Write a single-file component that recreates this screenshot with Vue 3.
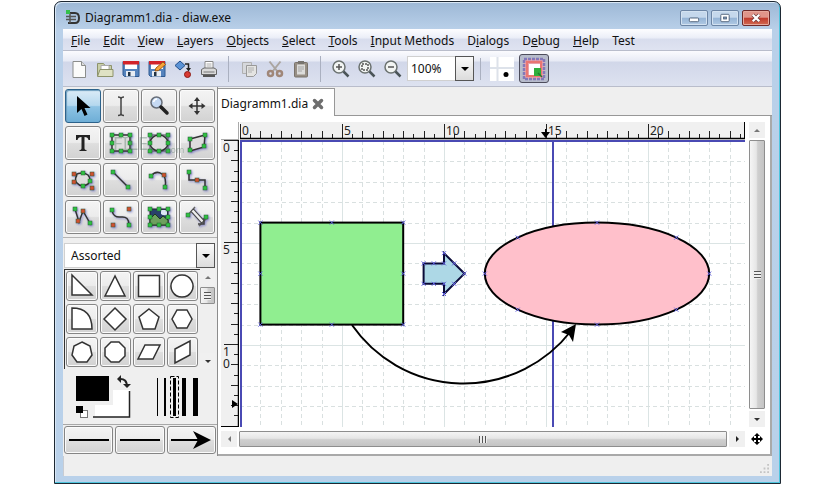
<script setup>
import { ref, computed, onMounted, onBeforeUnmount } from 'vue'

const menus = [
  ['', 'F', 'ile'], ['', 'E', 'dit'], ['', 'V', 'iew'], ['', 'L', 'ayers'],
  ['', 'O', 'bjects'], ['', 'S', 'elect'], ['', 'T', 'ools'], ['', 'I', 'nput Methods'],
  ['D', 'i', 'alogs'], ['D', 'e', 'bug'], ['', 'H', 'elp'], ['Test', '', '']
]

const floppy = '<path d="M2 2.500h16v15H3.500L2 16z" fill="#5583bd" stroke="#2f5a92"/><rect x="4" y="3" width="12" height="7" fill="#fff"/><rect x="2" y="2" width="16" height="3.500" fill="#d2232a"/><rect x="5" y="12" width="9" height="5.500" fill="#e8edf4"/><rect x="7" y="13" width="2.500" height="4" fill="#234"/>'
const lens = '<circle cx="8" cy="8" r="6" fill="#f2f5f3" stroke="#6b7270" stroke-width="1.500"/><path d="M12.500 12.500l5 5" stroke="#4b5558" stroke-width="2.500"/>'

const bar = [
  [
    ['New', '<path d="M4 2.500h8.500l4 4v12H4z" fill="#fbfbfa" stroke="#8b8d8b"/><path d="M12.500 2.500v4h4" fill="#ddd" stroke="#8b8d8b"/>'],
    ['Open', '<path d="M2.500 17V4.500h6l1.500 2h6.500v4" fill="#c9cfa9" stroke="#8d936b"/><path d="M6 6.500h8v5H6z" fill="#fff" stroke="#aaa"/><path d="M2.500 17.500l2.500-7h13v7z" fill="#dfe2c4" stroke="#8d936b"/>'],
    ['Save', floppy],
    ['Save As', floppy + '<path d="M8 12l1-3 7-6 2.500 2.500-7 6z" fill="#f6a43a" stroke="#a35b12"/>'],
    ['Export', '<path d="M2 6.500L7 2l5 4.500L7 11z" fill="#5b93d6" stroke="#234f8a"/><path d="M12 5h3.500v5" fill="none" stroke="#222" stroke-width="1.500"/><path d="M13 9h5l-2.500 3.500z" fill="#222"/><circle cx="14.500" cy="15.500" r="3" fill="#d93a32" stroke="#8d1a14"/>'],
    ['Print', '<path d="M6 10V2.500h8V10" fill="#fff" stroke="#888"/><path d="M7.500 5h5M7.500 7h5" stroke="#aaa"/><path d="M2.500 10.500L5 9h10l2.500 1.500v5h-15z" fill="#dadada" stroke="#666"/><path d="M4 17h12" stroke="#555" stroke-width="2"/><path d="M4.500 13h11" stroke="#777"/>']
  ],
  [
    ['Copy', '<path d="M3.500 3.500h9v11h-9z" fill="#d6d8dc" stroke="#b0b0b0"/><path d="M7.500 6.500h10v8l-3 3h-7z" fill="#e4e4e2" stroke="#999"/><path d="M9 9h6M9 11h6M9 13h4" stroke="#b0b0b0"/>'],
    ['Cut', '<path d="M4.500 2.500l8 10M15.500 2.500l-8 10" stroke="#aaa5a0" stroke-width="2"/><circle cx="5.500" cy="14.500" r="2.500" fill="none" stroke="#a08778" stroke-width="2.500"/><circle cx="14.500" cy="14.500" r="2.500" fill="none" stroke="#a08778" stroke-width="2.500"/>'],
    ['Paste', '<rect x="3.500" y="3.500" width="13" height="14.500" rx="1" fill="#978f85" stroke="#79736b"/><path d="M6 5.500h8v10H6z" fill="#dcdcda"/><rect x="7" y="2" width="6" height="3" fill="#77746f"/><path d="M7 8h6M7 10h6M7 12h4" stroke="#a5a5a5"/>']
  ],
  [
    ['Zoom In', lens + '<path d="M5 8h6M8 5v6" stroke="#555" stroke-width="1.500"/>'],
    ['Zoom Fit', lens + '<rect x="5" y="5" width="6" height="6" fill="none" stroke="#555" stroke-width="1.500" stroke-dasharray="2 1"/>'],
    ['Zoom Out', lens + '<path d="M5 8h6" stroke="#555" stroke-width="1.500"/>']
  ]
]

const dots = (pts, c = '#2fc043') =>
  pts.map(([x, y]) => `<rect x="${x - 2}" y="${y - 2}" width="4" height="4" fill="${c}" stroke="#2a5a30" stroke-width=".5"/>`).join('')
const frame = [[3, 4], [12, 4], [21, 4], [3, 12], [21, 12], [3, 20], [12, 20], [21, 20]]
const red = '#d05030'

const tools = [
  ['Modify', '<path d="M6 2v17l4.500-4 3 7 3-1.500-3-6.500h6z" fill="#000"/>'],
  ['Text edit', '<path d="M9 3q3 0 3 2q0-2 3-2M12 5v15M9 21.500q3 0 3-2q0 2 3 2" fill="none" stroke="#444" stroke-width="1.500"/>'],
  ['Magnify', '<circle cx="9.500" cy="8.500" r="5.500" fill="#c5d9f3" stroke="#666d78" stroke-width="1.500"/><path d="M6.500 8q1-3 3.500-3" stroke="#fff" stroke-width="1.500" fill="none"/><path d="M14 13l6 6" stroke="#222" stroke-width="3.500" stroke-linecap="round"/>'],
  ['Scroll', '<path d="M12 5v14M5 12h14" stroke="#333" stroke-width="1.500"/><path d="M12 3l3 4H9zM12 21l3-4H9zM3.500 12l4-3v6zM20.500 12l-4-3v6z" fill="#333"/>'],
  ['Text', '<path d="M5 4h14v5h-1.500q-.5-3-4-3v11.500q0 1.500 2 1.500v1h-7v-1q2 0 2-1.500V6q-3.500 0-4 3H5z" fill="#222"/>'],
  ['Box', '<rect x="3" y="4" width="18" height="16" fill="#ddd" stroke="#333" stroke-width="1.500"/>' + dots(frame)],
  ['Ellipse', '<rect x="3" y="4" width="18" height="16" fill="none" stroke="#555"/><ellipse cx="12" cy="12" rx="9" ry="8" fill="#ddd" stroke="#333" stroke-width="1.500"/>' + dots(frame)],
  ['Polygon', '<path d="M5 8l15-4-1 12-14 4z" fill="#ddd" stroke="#333" stroke-width="1.500"/>' + dots([[5, 8], [20, 4], [19, 15], [5, 19]])],
  ['Beziergon', '<path d="M4 7q7-4 13 0q4 5 0 9q-7 4-11-1q-3-3 0-8" fill="#ddd" stroke="#333" stroke-width="1.500"/>' + dots([[12, 5], [19, 13], [12, 18]]) + dots([[3, 6], [21, 6], [3, 14], [21, 20]], red)],
  ['Line', '<path d="M4 4l16 16" stroke="#333" stroke-width="1.500"/>' + dots([[4, 4], [19, 19]])],
  ['Arc', '<path d="M4 8q5-6 11-2q5 4 3 13" fill="none" stroke="#333" stroke-width="1.500"/>' + dots([[4, 8], [18, 19]]) + dots([[17, 7]], red)],
  ['Zigzagline', '<path d="M4 4v8h16v9" fill="none" stroke="#333" stroke-width="1.500"/>' + dots([[4, 4], [20, 20]]) + dots([[12, 12]], red)],
  ['Polyline', '<path d="M4 4l4 13 4-11 8 14" fill="none" stroke="#333" stroke-width="1.500"/>' + dots([[4, 4], [19, 18]]) + dots([[7, 16], [12, 6]], red)],
  ['Bezierline', '<path d="M3 5q1 8 9 7q8-1 8 8" fill="none" stroke="#333" stroke-width="1.500"/>' + dots([[3, 5], [20, 20]]) + dots([[20, 4], [4, 20]], red)],
  ['Image', '<rect x="3" y="4" width="18" height="16" fill="#29406b" stroke="#222"/><path d="M14 5h6v5q-4 1-6-1z" fill="#dce7f4"/><path d="M3 14l5-5 5 5 3-3 5 4v5H3z" fill="#6da05e" stroke="#1d3a1d"/>' + dots(frame)],
  ['Outline', '<path d="M3 10l7-8M14 21l8-8" stroke="#666" stroke-width="1.500"/><path d="M7 5l11 12" stroke="#444" stroke-width="4.500"/><path d="M7.500 5.500l10 11" stroke="#eee" stroke-width="2.500"/><path d="M19 13v6h-6" fill="none" stroke="#444" stroke-width="1.500"/>' + dots([[3, 10], [21, 12]])]
]

const shapes = [
  ['Right triangle', 'M4 3v20h20z'],
  ['Triangle', 'M14 4L4 24h20z'],
  ['Square', 'M3.500 3.500h21v21h-21z'],
  ['Circle', 'M14 3a11 11 0 1 0 .01 0z'],
  ['Quarter circle', 'M4 3q20 0 20 21H4z'],
  ['Diamond', 'M14 3l11 11-11 11L3 14z'],
  ['Pentagon', 'M14 4l10 8-4 12H8L4 12z'],
  ['Hexagon', 'M9 5h10l5 9-5 9H9l-5-9z'],
  ['Heptagon', 'M14 4l8 4 2 9-5 7H9l-5-7 2-9z'],
  ['Octagon', 'M10 4h8l6 6v8l-6 6h-8l-6-6v-8z'],
  ['Parallelogram', 'M10 7h15l-7 14H3z'],
  ['Slanted parallelogram', 'M7 11l15-8v14L7 25z']
]

/* canvas geometry, in pixels per diagram unit */
const UNIT = 20.4
const u = n => n * UNIT
const tick = n => (n % 5 === 0 ? 14 : Number.isInteger(n) ? 7 : 4)

const canvas = ref(null)
const size = ref({ w: 0, h: 0 })
const steps = px => Array.from({ length: Math.floor((px / UNIT) * 2) + 1 }, (_, i) => i / 2)
const isWhole = n => Number.isInteger(n)
const xs = computed(() => steps(size.value.w))
const ys = computed(() => steps(size.value.h))
const labels = (list, px) => list.filter(n => n % 5 === 0 && u(n) + 24 < px)
const xLabels = computed(() => labels(xs.value, size.value.w))
const yLabels = computed(() => labels(ys.value, size.value.h))

let watcher
const measure = () => {
  const r = canvas.value.getBoundingClientRect()
  size.value = { w: r.width, h: r.height }
}
onMounted(() => {
  measure()
  watcher = new ResizeObserver(measure)
  watcher.observe(canvas.value)
})
onBeforeUnmount(() => watcher && watcher.disconnect())

const k = Math.SQRT1_2
const handles = [
  [1, 4], [4.5, 4], [8, 4], [1, 6.5], [8, 6.5], [1, 9], [4.5, 9], [8, 9],
  [9, 6], [9.5, 6], [10, 6], [10, 5.5], [10.5, 6], [11, 6.5], [10.5, 7], [10, 7.5], [10, 7], [9.5, 7], [9, 7],
  [12, 6.5], [23, 6.5], [17.5, 4], [17.5, 9],
  [17.5 - 5.5 * k, 6.5 - 2.5 * k], [17.5 + 5.5 * k, 6.5 - 2.5 * k],
  [17.5 - 5.5 * k, 6.5 + 2.5 * k], [17.5 + 5.5 * k, 6.5 + 2.5 * k]
]
const arrowShape = [[9, 6], [10, 6], [10, 5.5], [11, 6.5], [10, 7.5], [10, 7], [9, 7]]
  .map(p => p.map(u).join(',')).join(' ')

const active = ref('Modify')
const snap = ref(true)
const zoom = ref('100%')
const sheet = ref('Assorted')
</script>

<template>
  <div class="desktop">
    <div class="window">
      <header class="title">
        <svg class="logo" viewBox="0 0 16 16" aria-hidden="true">
          <path d="M3 3h7q4 0 4 5t-4 5H3" fill="none" stroke="#333" stroke-width="2" />
          <path d="M1 6.500h10M1 9.500h10M5 3v10" stroke="#555" stroke-width="1.500" />
          <rect x="1" y="0" width="4" height="4" fill="#35c04a" />
        </svg>
        <h1>Diagramm1.dia - diaw.exe</h1>
        <div class="controls">
          <button aria-label="Minimize"><svg viewBox="0 0 28 15"><rect x="9" y="7.500" width="10" height="4" rx="1" fill="#fff" stroke="#4d5f78" /></svg></button>
          <button aria-label="Maximize"><svg viewBox="0 0 28 15"><rect x="9.500" y="3.500" width="9" height="8" rx="1" fill="#fff" stroke="#4d5f78" /><rect x="12.500" y="6.500" width="3" height="2" fill="#8ba9cb" stroke="#4d5f78" /></svg></button>
          <button class="close" aria-label="Close"><svg viewBox="0 0 28 15"><path d="M10.500 4l7 7M17.500 4l-7 7" stroke="#6e3a3a" stroke-width="4" /><path d="M10.500 4l7 7M17.500 4l-7 7" stroke="#fff" stroke-width="2.500" /></svg></button>
        </div>
      </header>

      <nav class="menu">
        <button v-for="m in menus" :key="m.join('')">{{ m[0] }}<u>{{ m[1] }}</u>{{ m[2] }}</button>
      </nav>

      <div class="toolbar">
        <div v-for="(group, g) in bar" :key="g" class="group">
          <button v-for="b in group" :key="b[0]" class="flat" :aria-label="b[0]">
            <svg viewBox="0 0 20 20" v-html="b[1]" />
          </button>
        </div>
        <div class="combo zoom">
          <select v-model="zoom" aria-label="Zoom"><option>50%</option><option>100%</option><option>200%</option></select>
          <span class="drop"></span>
        </div>
        <i class="rule"></i>
        <button class="grid-toggle" aria-label="Snap to grid">
          <svg viewBox="0 0 24 24"><path d="M0 0h24v24H0z" fill="#fff" /><path d="M7.500 0v24M0 11h24" stroke="#dde2ea" stroke-width="2" /><circle cx="16" cy="17.500" r="2.500" /></svg>
        </button>
        <button class="snap" :aria-pressed="snap" aria-label="Snap to objects" @click="snap = !snap">
          <svg viewBox="0 0 24 24">
            <rect x="2" y="2" width="20" height="20" fill="#e9a0aa" stroke="#8478b8" stroke-width="2.500" stroke-dasharray="3 1" />
            <rect x="5" y="5" width="14" height="14" fill="none" stroke="#ea7672" stroke-width="2" />
            <rect x="7" y="7" width="11" height="11" fill="#fff" />
            <path d="M12 11h7v8h-7z" fill="#2fae3c" />
            <path d="M16 16l4 4" stroke="#217a30" stroke-width="1.500" />
          </svg>
        </button>
      </div>

      <main class="work">
        <aside class="side">
          <div class="tools">
            <button v-for="(t, i) in tools" :key="t[0]" :class="['tool', { on: active === t[0], glow: i > 4 }]" :aria-label="t[0]" @click="active = t[0]">
              <svg viewBox="0 0 24 24" v-html="t[1]" />
            </button>
            <div class="mark" aria-hidden="true"><b>FILE</b><small>.com</small></div>
          </div>
          <div class="sheet">
            <div class="combo">
              <select v-model="sheet" aria-label="Sheet"><option>Assorted</option><option>Flowchart</option><option>UML</option></select>
              <span class="drop"></span>
            </div>
            <div class="palette">
              <div class="shapes">
                <button v-for="s in shapes" :key="s[0]" class="shape" :aria-label="s[0]">
                  <svg viewBox="0 0 28 28"><path :d="s[1]" fill="#fff" stroke="#333" stroke-width="1.500" /></svg>
                </button>
              </div>
              <div class="vbar slim">
                <button class="arrow up" aria-label="Scroll up"></button>
                <span class="thumb"><i class="grip"></i></span>
                <button class="arrow down" aria-label="Scroll down"></button>
              </div>
            </div>
          </div>
          <div class="style">
            <svg class="colors" viewBox="0 0 56 44" role="img" aria-label="Foreground and background colours">
              <rect x="20" y="15" width="35" height="27" fill="#fff" />
              <path d="M54.500 16v26H18" fill="none" stroke="#222" stroke-width="1.500" />
              <rect x="0" y="0" width="38" height="30" fill="#efefef" />
              <rect x="1" y="1" width="33" height="25" />
              <path d="M44 4q8-1 8 8" fill="none" stroke="#222" stroke-width="2" />
              <path d="M46 0v8l-4-4zM48 9h8l-4 4z" fill="#222" />
              <rect x="0" y="30" width="17" height="14" fill="#efefef" />
              <rect x="5.500" y="35.500" width="7" height="7" fill="#fff" stroke="#777" />
              <rect x="1" y="31" width="7" height="7" />
            </svg>
            <svg class="widths" viewBox="0 0 44 44" role="img" aria-label="Line width">
              <path d="M1.500 3v38" stroke="#000" />
              <path d="M9 3v38" stroke="#000" stroke-width="2" />
              <path d="M18.500 3v38" stroke="#000" stroke-width="3" />
              <path d="M28 3v38" stroke="#000" stroke-width="4" />
              <path d="M39.500 3v38" stroke="#000" stroke-width="5" />
              <rect x="14.500" y="1.500" width="8" height="41" fill="none" stroke="#000" stroke-dasharray="4 2" />
            </svg>
          </div>
          <div class="lines">
            <button aria-label="Start arrow"><svg viewBox="0 0 44 20"><path d="M2 10h40" stroke="#000" stroke-width="2" /></svg></button>
            <button aria-label="Line style"><svg viewBox="0 0 44 20"><path d="M2 10h40" stroke="#000" stroke-width="2" /></svg></button>
            <button aria-label="End arrow"><svg viewBox="0 0 44 20"><path d="M2 10h34" stroke="#000" stroke-width="2" /><path d="M42 10L24 1l5 9-5 9z" /></svg></button>
          </div>
        </aside>

        <section class="book">
          <div class="tabs">
            <div class="tab">
              <span>Diagramm1.dia</span>
              <button aria-label="Close tab"><svg viewBox="0 0 12 12"><path d="M2.500 2.500l7 7M9.500 2.500l-7 7" stroke="#6e6e6e" stroke-width="3.500" stroke-linecap="round" /></svg></button>
            </div>
          </div>
          <div class="page">
            <div class="corner"></div>
            <svg class="hruler">
              <path v-for="n in xs" :key="n" :d="`M${Math.round(u(n)) + 0.5} 16v${-tick(n)}`" stroke="#222" />
              <text v-for="n in xLabels" :key="n" :x="u(n) + 2" y="13">{{ n }}</text>
              <path :d="`M0 16.500h${size.w}`" stroke="#000" stroke-width="1.500" />
              <path :d="`M${size.w - 0.5} 0v17`" stroke="#000" />
              <path d="M301 10h9l-4.500 6zM305 7h1.500v5h-1.500z" />
            </svg>
            <svg class="vruler">
              <path v-for="n in ys" :key="n" :d="`M17 ${Math.round(u(n)) + 0.5}h${-tick(n)}`" stroke="#222" />
              <g v-for="n in yLabels" :key="n">
                <text v-for="(c, i) in String(n)" :key="i" x="2" :y="u(n) + 12 + i * 12">{{ c }}</text>
              </g>
              <path :d="`M17.500 0v${size.h}`" stroke="#000" stroke-width="1.500" />
              <path :d="`M0 ${size.h - 0.5}h17`" stroke="#000" />
              <path d="M11 260v8l6-4z" />
            </svg>
            <svg ref="canvas" class="canvas" role="img" aria-label="Diagram">
              <g transform="translate(0 1)">
                <path v-for="n in xs.filter(isWhole)" :key="'x' + n" :class="n % 5 ? 'minor' : 'major'" :d="`M${Math.round(u(n)) + 0.5} 0v${size.h}`" />
                <path v-for="n in ys.filter(isWhole)" :key="'y' + n" :class="n % 5 ? 'minor' : 'major'" :d="`M0 ${Math.round(u(n)) + 0.5}h${size.w}`" />
                <path class="guide" :d="`M1 ${size.h}V0H${size.w}M313 0V${size.h}`" />
                <rect class="box" :x="u(1)" :y="u(4)" :width="u(7)" :height="u(5)" />
                <ellipse class="oval" :cx="u(17.5)" :cy="u(6.5)" :rx="u(5.5)" :ry="u(2.5)" />
                <polygon class="block" :points="arrowShape" />
                <path class="arc" d="M112 184A136 136 0 0 0 331 190" />
                <path class="head" d="M336 183l-15 8 8 3 4 7z" />
                <path v-for="(h, i) in handles" :key="i" class="handle" :d="`M${u(h[0]) - 2} ${u(h[1]) - 2}l4 4m0-4l-4 4`" />
              </g>
            </svg>
            <div class="vbar">
              <button class="arrow up" aria-label="Scroll up"></button>
              <span class="thumb"><i class="grip"></i></span>
              <button class="arrow down" aria-label="Scroll down"></button>
            </div>
            <div class="hbar">
              <button class="arrow left" aria-label="Scroll left"></button>
              <span class="thumb"><i class="grip"></i></span>
              <button class="arrow right" aria-label="Scroll right"></button>
            </div>
            <button class="pan" aria-label="Pan"><svg viewBox="0 0 12 12"><path d="M6 1v10M1 6h10" stroke="#000" stroke-width="2" /><path d="M6 0l3 3H3zM6 12l3-3H3zM0 6l3-3v6zM12 6L9 3v6z" /></svg></button>
          </div>
        </section>
      </main>

      <footer class="status">
        <svg viewBox="0 0 10 10" aria-hidden="true"><path d="M8 0h2v2H8zM8 4h2v2H8zM4 4h2v2H4zM8 8h2v2H8zM4 8h2v2H4zM0 8h2v2H0z" fill="#c4c4c4" /></svg>
      </footer>
    </div>
  </div>
</template>

<style>
body { margin: 0; background: #fff; }
</style>

<style scoped>
* { box-sizing: border-box; }
.desktop {
  display: flex;
  min-height: 100vh;
  padding: 1px 55px 0 54px;
  font: 12px/16px "Noto Sans", "Open Sans", sans-serif;
  color: #111;
}
.window {
  flex: 1;
  min-width: 0;
  display: flex;
  flex-direction: column;
  padding: 0 8px 7px;
  border: 1px solid #1d2833;
  border-radius: 7px 7px 0 0;
  background: linear-gradient(#9db8d6, #b9d0e9 28px, #b9d1ea);
  box-shadow: inset -1px -1px #4fc5dd, inset 1px 1px #d9e7f5;
}
button { margin: 0; padding: 0; border: 0; background: none; font: inherit; color: inherit; }
svg { display: block; }

.title { display: flex; align-items: center; height: 27px; padding: 5px 2px 0; }
.logo { width: 16px; height: 16px; }
h1 { flex: 1; margin: 0 0 0 4px; font: inherit; }
.controls { display: flex; gap: 3px; align-self: flex-start; padding-top: 3px; }
.controls button {
  width: 28px; height: 16px;
  border: 1px solid #6c85a5; border-radius: 2px;
  background: linear-gradient(#c5d8ec 45%, #94b3d5 50%, #b1cae4);
  box-shadow: inset 0 0 0 1px #d3e2f1;
}
.controls svg { width: 26px; height: 14px; }
.controls .close { border-color: #6f2a2a; background: linear-gradient(#e0958a 45%, #c03a2c 50%, #d26a52); box-shadow: inset 0 0 0 1px #e6a89c; }

.menu {
  display: flex; align-items: center; gap: 13px;
  height: 22px; padding: 2px 8px 0;
  border-bottom: 1px solid #b9bdcb;
  background: linear-gradient(#fdfdff, #eceff8 40%, #d8dded 50%, #dfe3f1);
}
.toolbar {
  display: flex; align-items: center;
  height: 36px; padding: 0 0 0 3px;
  border-bottom: 1px solid #b9bdcb;
  background: linear-gradient(#fbfbfe, #e8ebf5 28%, #d1d7e9 32%, #dde2f0);
}
.group { display: flex; }
.group + .group { border-left: 1px solid #aab0c0; margin-left: 6px; padding-left: 7px; }
.flat { width: 26px; height: 26px; display: grid; place-items: center; }
.flat svg { width: 20px; height: 20px; }
.rule { width: 1px; height: 22px; margin: 0 9px 0 6px; background: #aab0c0; }
.combo { display: grid; grid-template-columns: 1fr 19px; height: 25px; }
.combo select {
  grid-area: 1 / 1 / 2 / 3; appearance: none; margin: 0; padding: 0 20px 0 6px;
  border: 1px solid #d0d0d0; border-radius: 0; background: #fff; font: inherit; color: inherit; min-width: 0;
}
.combo .drop {
  grid-area: 1 / 2 / 2 / 3; display: grid; place-items: center; pointer-events: none;
  border: 1px solid #555; background: linear-gradient(#fafafa, #dcdcdc);
}
.drop::after { content: ""; border: 4px solid transparent; border-top-color: #000; border-bottom: 0; }
.zoom { width: 67px; margin-left: 1px; }
.zoom select { padding-left: 3px; }
.grid-toggle svg { width: 24px; height: 24px; }
.snap { width: 30px; height: 29px; margin-left: 5px; border: 1px solid #4d4d5c; border-radius: 3px; background: #b7bccb; display: grid; place-items: center; }
.snap svg { width: 24px; height: 24px; }

.work { flex: 1; display: flex; min-height: 0; background: #efefef; }
.side { width: 155px; flex: none; display: flex; flex-direction: column; border-right: 1px solid #8c8c8c; }
.tools {
  position: relative;
  display: grid; grid-template-columns: repeat(4, 1fr); grid-auto-rows: 34px; gap: 3px 2px;
  padding: 2px 2px 3px; border-bottom: 1px solid #b4b4b4;
}
.tool, .shape, .lines button {
  display: grid; place-items: center;
  border: 1px solid #858585; border-radius: 3px;
  background: linear-gradient(#f4f4f4, #ececec 48%, #dedede 52%, #d2d2d2);
  box-shadow: inset 0 0 0 1px #fbfbfb;
}
.tool svg { width: 24px; height: 24px; }
.tool.on { border-color: #2c628b; background: linear-gradient(#dcecf7, #b5d8ee 48%, #8ec3e4 52%, #6eaed6); box-shadow: inset 1px 1px 1px #6c9dbd; }
.glow svg { filter: drop-shadow(1px 1px 1px rgba(80, 80, 190, .6)); }
.mark { position: absolute; left: 50px; top: 45px; display: flex; color: #5b7d6c; opacity: .4; line-height: 22px; pointer-events: none; }
.mark b { font-size: 18px; font-weight: 400; }
.mark small { padding: 10px 0 0 16px; font-size: 9px; line-height: 16px; }

.sheet { padding: 5px 2px 0 1px; }
.palette { display: flex; margin-top: 1px; }
.shapes {
  flex: 1; display: grid; grid-template-columns: repeat(4, 1fr); grid-auto-rows: 30px; gap: 3px 2px;
  padding: 1px 2px 2px 1px; border: solid #333; border-width: 1px 0 0 1px;
}
.shape svg { width: 28px; height: 28px; }

.vbar { display: flex; flex-direction: column; width: 16px; gap: 2px; }
.hbar { display: flex; height: 16px; gap: 2px; }
.thumb { flex: 1; display: grid; place-items: center; border: 1px solid #8e8e8e; border-radius: 1px; }
.vbar .thumb { background: linear-gradient(90deg, #f5f5f5, #e6e6e6 45%, #cfcfcf 55%, #c4c4c4); }
.hbar .thumb { background: linear-gradient(#f5f5f5, #e6e6e6 45%, #cfcfcf 55%, #c4c4c4); }
.vbar .grip { width: 7px; height: 8px; background: repeating-linear-gradient(#555 0 1px, #eee 1px 3px); }
.hbar .grip { width: 8px; height: 7px; background: repeating-linear-gradient(90deg, #555 0 1px, #eee 1px 3px); }
.arrow { flex: none; width: 16px; height: 16px; display: grid; place-items: center; background: #f0f0f0; }
.arrow::after { content: ""; border: 3px solid transparent; }
.arrow.up::after { border-bottom-color: #777; border-top: 0; }
.arrow.down::after { border-top-color: #333; border-bottom: 0; }
.arrow.left::after { border-right-color: #777; border-left: 0; }
.arrow.right::after { border-left-color: #222; border-right: 0; }
.vbar.slim, .slim .arrow { width: 15px; }
.slim .thumb { flex: none; height: 17px; }
.slim .down { margin-top: auto; }

.style { flex: 1; display: flex; justify-content: space-between; align-items: center; padding: 0 17px 0 12px; border-bottom: 1px solid #a8a8a8; }
.colors { width: 56px; height: 44px; }
.widths { width: 44px; height: 44px; }
.lines { display: grid; grid-template-columns: repeat(3, 1fr); gap: 2px; padding: 1px 1px 2px; }
.lines button { height: 28px; }
.lines svg { width: 44px; height: 20px; }

.book { flex: 1; min-width: 0; display: flex; flex-direction: column; }
.tabs { display: flex; height: 29px; padding-top: 1px; border-bottom: 1px solid #979797; }
.tab {
  display: flex; align-items: center; gap: 4px; height: 28px; margin-bottom: -1px; padding: 2px 10px 0 3px;
  border: solid #979797; border-width: 1px 1px 0 0; background: #fff;
}
.tab svg { width: 12px; height: 12px; }
.page {
  flex: 1; min-height: 0;
  display: grid; grid-template: 18px minmax(0, 1fr) 4px 16px / 19px minmax(0, 1fr) 20px;
  padding: 6px 5px 7px 3px;
  border: solid #a9a9a9; border-width: 0 2px 2px 0; background: #fff;
}
.corner { margin-right: 1px; border: solid #aaa; border-width: 0 1px 1px 0; }
.hruler { width: 100%; height: 18px; background: #f0f0f0; }
.vruler { grid-area: 2 / 1; width: 18px; height: 100%; background: #f0f0f0; }
.canvas { grid-area: 2 / 2; width: 100%; height: 100%; }
.page > .vbar { grid-area: 1 / 3 / 3 / 4; justify-self: end; }
.hbar { grid-area: 4 / 1 / 5 / 3; }
.hruler text, .vruler text { font-size: 12px; fill: #222; }
.pan { grid-area: 4 / 3; justify-self: end; width: 16px; display: grid; place-items: center; }
.pan svg { width: 12px; height: 12px; }

.canvas path { fill: none; }
.canvas .minor { stroke: #d9e0e0; stroke-dasharray: 4 3; }
.canvas .major { stroke: #dbe4e4; }
.canvas .guide { stroke: #4a4ab4; stroke-width: 2; }
.box, .oval, .block, .arc { stroke: #000; stroke-width: 2; }
.box { fill: #90ee90; }
.oval { fill: #ffc0cb; }
.block { fill: #add8e6; stroke: #0a0a38; }
.canvas .head { fill: #000; }
.canvas .handle { stroke: #6060e0; }

.status { display: flex; justify-content: flex-end; align-items: flex-end; height: 20px; padding: 0 3px 3px; border: 1px solid #c9ccd2; border-width: 0 0 0 1px; background: #efefef; }
.status svg { width: 9px; height: 9px; }
</style>
